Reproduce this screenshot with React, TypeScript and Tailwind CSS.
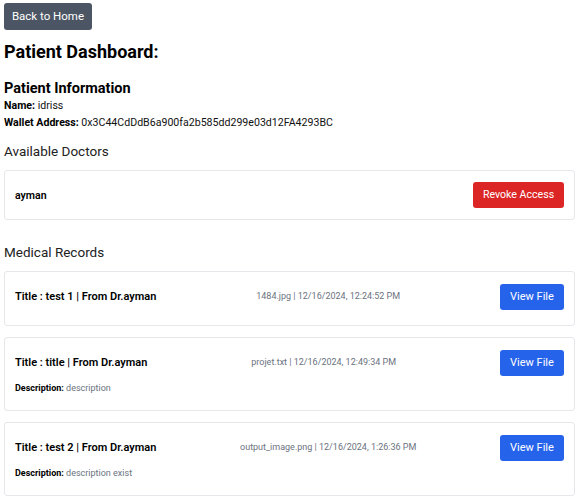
import React from "react";

const records = [
  { title: "test 1", meta: "1484.jpg | 12/16/2024, 12:24:52 PM", desc: null as string | null },
  { title: "title", meta: "projet.txt | 12/16/2024, 12:49:34 PM", desc: "description" },
  { title: "test 2", meta: "output_image.png | 12/16/2024, 1:26:36 PM", desc: "description exist" },
];

export default function App() {
  return (
    <div
      className="bg-white text-[#111] pl-1 pr-[11px] pt-[3px] min-h-[500px]"
      style={{ fontFamily: 'Roboto, "Noto Sans", sans-serif' }}
    >
      <button className="bg-[#4b5563] text-white text-[11.5px] w-[88px] h-[27px] rounded-[3px] flex items-center justify-center">
        Back to Home
      </button>
      <h1 className="text-[18px] font-bold leading-[22px] mt-[11px] text-black">Patient Dashboard:</h1>
      <h2 className="text-[14.5px] font-bold leading-[17px] mt-[17px] text-black">Patient Information</h2>
      <p className="text-[10.6px] leading-[16px] mt-[1px]">
        <span className="font-bold text-black">Name:</span> idriss
      </p>
      <p className="text-[10.6px] leading-[17px]">
        <span className="font-bold text-black">Wallet Address:</span> 0x3C44CdDdB6a900fa2b585dd299e03d12FA4293BC
      </p>
      <h3 className="text-[13.5px] leading-[18px] mt-[11px] text-[#222]">Available Doctors</h3>
      <div className="mt-[10px] border border-[#e5e7eb] rounded-[3px] px-[10px] py-[11px] flex items-center justify-between">
        <span className="text-[10.6px] font-semibold text-black pt-[2px]">ayman</span>
        <button className="bg-[#dc2626] text-white text-[10.6px] w-[91px] h-[26px] rounded-[3px] flex items-center justify-center">
          Revoke Access
        </button>
      </div>
      <h3 className="text-[13.5px] leading-[18px] mt-[23px] text-[#222]">Medical Records</h3>
      <div className="mt-[10px] flex flex-col gap-[11px]">
        {records.map((r) => (
          <div key={r.title} className="border border-[#e5e7eb] rounded-[3px] px-[10px] pt-[12px] pb-[15px]">
            <div className="flex items-center justify-between">
              <span className="text-[11px] font-semibold text-black whitespace-nowrap">
                Title : {r.title} | From Dr.ayman
              </span>
              <span className="text-[9px] text-[#6b7280] whitespace-nowrap">{r.meta}</span>
              <button className="bg-[#2563eb] text-white text-[11px] w-[64px] h-[26px] rounded-[3px] flex items-center justify-center">
                View File
              </button>
            </div>
            {r.desc && (
              <p className="text-[9px] leading-[14px] mt-[5px]">
                <span className="font-bold text-black">Description:</span>{" "}
                <span className="text-[#6b7280]">{r.desc}</span>
              </p>
            )}
          </div>
        ))}
      </div>
    </div>
  );
}
